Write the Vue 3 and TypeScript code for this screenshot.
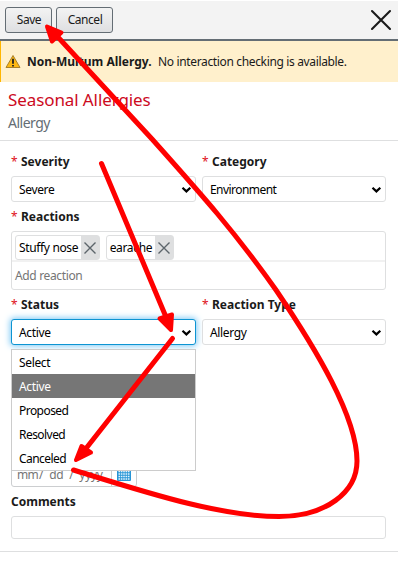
<script setup lang="ts">
import { ref } from 'vue'

const severity = ref('Severe')
const category = ref('Environment')
const status = ref('Active')
const reactionType = ref('Allergy')
const reactions = ref<string[]>(['Stuffy nose', 'earache'])
const statusOptions: string[] = ['Select', 'Active', 'Proposed', 'Resolved', 'Canceled']

function removeReaction(index: number) {
  reactions.value.splice(index, 1)
}
</script>

<template>
  <div class="panel">
    <header class="toolbar">
      <button class="btn save">Save</button>
      <button class="btn cancel">Cancel</button>
      <svg class="close" width="22" height="22" viewBox="0 0 22 22"><path d="M2 2 20 20M20 2 2 20" /></svg>
    </header>

    <div class="alert">
      <svg class="warn" width="18" height="16" viewBox="0 0 18 16">
        <path d="M8 1.5 1 13.5H15Z" fill="#fdb813" stroke="#a9802a" stroke-width="1" stroke-linejoin="round" />
        <path d="M8 4.8V9.8M8 11V12.6" stroke="#222" stroke-width="1.8" />
      </svg>
      <strong>Non-Multum Allergy.</strong>
      <span>No interaction checking is available.</span>
    </div>

    <div class="heading">
      <h1>Seasonal Allergies</h1>
      <p>Allergy</p>
    </div>

    <main class="form">
      <div class="row">
        <div class="field">
          <label><i>*</i><b>Severity</b></label>
          <div class="select"><span>{{ severity }}</span><svg width="11" height="8" viewBox="0 0 11 8"><path d="M1.5 1.7 5.4 5.4 9.3 1.7" /></svg></div>
        </div>
        <div class="field">
          <label><i>*</i><b>Category</b></label>
          <div class="select"><span class="tight">{{ category }}</span><svg width="11" height="8" viewBox="0 0 11 8"><path d="M1.5 1.7 5.4 5.4 9.3 1.7" /></svg></div>
        </div>
      </div>

      <label><i>*</i><b>Reactions</b></label>
      <div class="reactions">
        <div class="chips">
          <span v-for="(name, i) in reactions" :key="name" class="chip">
            <span class="chip-name">{{ name }}</span>
            <span class="chip-x" @click="removeReaction(i)"><svg width="14" height="14" viewBox="0 0 14 14"><path d="M1.5 1.5 12.5 12.5M12.5 1.5 1.5 12.5" /></svg></span>
          </span>
        </div>
        <div class="add">Add reaction</div>
      </div>

      <div class="row">
        <div class="field status">
          <label><i>*</i><b>Status</b></label>
          <div class="select focus"><span>{{ status }}</span><svg width="11" height="8" viewBox="0 0 11 8"><path d="M1.5 1.7 5.4 5.4 9.3 1.7" /></svg></div>
          <ul class="menu">
            <li v-for="o in statusOptions" :key="o" :class="{ on: o === status, tight: o.length > 6 }" @click="status = o">{{ o }}</li>
          </ul>
        </div>
        <div class="field">
          <label><i>*</i><b>Reaction Type</b></label>
          <div class="select"><span>{{ reactionType }}</span><svg width="11" height="8" viewBox="0 0 11 8"><path d="M1.5 1.7 5.4 5.4 9.3 1.7" /></svg></div>
        </div>
      </div>

      <div class="date">
        <span class="mask"><span class="mm">mm</span><span>/</span><span class="dd">dd</span><span>/</span><span class="yy">yyyy</span></span>
        <span class="cal">
          <svg width="14" height="13" viewBox="0 0 14 13">
            <rect width="14" height="13" rx="1" fill="#2795d6" />
            <path d="M1.500 3.500H12.500M1.500 6H12.500M1.500 8.500H12.500M1.500 11H12.500" stroke="#e4f3fc" stroke-width="1.6" stroke-dasharray="1.6 .75" />
          </svg>
        </span>
      </div>

      <label class="plain"><b>Comments</b></label>
      <div class="comments"></div>
    </main>

    <svg class="arrows" width="404" height="562" viewBox="0 0 404 562">
      <path class="line" d="M101.500 163.500 166 317" />
      <path class="head" d="M171 330 159.500 318.500 172 314.500Z" />
      <path class="line" d="M172.500 338.500 84 451" />
      <path class="head" d="M76 460 81.500 446 91 452.500Z" />
      <path class="line" d="M73.500 470C145 492 219 516.500 279 516.500C326 516.500 357 492 357 461C357 417 316 349 276 290C235 232 202 195 152 139L56 35" />
      <path class="head" d="M47 26.500 61.500 32.500 52 41.500Z" />
    </svg>
  </div>
</template>

<style>
body {
  background: #fff;
}
</style>

<style scoped>
* {
  box-sizing: border-box;
}
.panel {
  position: relative;
  width: 404px;
  height: 562px;
  padding: 1px 6px 0 0;
  overflow: hidden;
  font: 12px/16px 'Noto Sans', 'Open Sans', sans-serif;
  letter-spacing: -0.35px;
  color: #1a1a1a;
}
.toolbar {
  display: flex;
  gap: 4px;
  height: 40px;
  padding: 6px 6px 0 5px;
  background: #f3f3f3;
  border-bottom: 2px solid #646d74;
}
.btn {
  height: 26px;
  padding: 0 0 0 1px;
  font: inherit;
  letter-spacing: -0.45px;
  color: #1a1a1a;
  background: linear-gradient(#f3f3f3, #dedfe1);
  border: 1px solid #646d74;
  border-radius: 3px;
}
.save {
  width: 47px;
}
.cancel {
  width: 57px;
}
.close {
  margin: 2px 0 0 auto;
  fill: none;
  stroke: #1a1a1a;
  stroke-width: 2.1;
  stroke-linecap: round;
}
.alert {
  display: flex;
  align-items: center;
  height: 41px;
  padding-left: 4px;
  background: #fff0cc;
  border-left: 1px solid #ffb600;
}
.alert strong {
  width: 131px;
  margin-left: 4px;
  letter-spacing: 0;
  white-space: nowrap;
}
.alert span {
  white-space: nowrap;
}
.heading {
  height: 59px;
  padding: 6px 0 0 8px;
  border-bottom: 1px solid #dedfe0;
}
h1 {
  margin: 0;
  font-size: 17px;
  font-weight: 400;
  line-height: 24px;
  letter-spacing: -0.1px;
  color: #cc0a1e;
}
p {
  margin: 1px 0 0;
  font-size: 14px;
  line-height: 20px;
  letter-spacing: -0.5px;
  color: #646d74;
}
.form {
  height: 411px;
  padding: 10px 12px 0 11px;
  border-bottom: 1px solid #dedfe0;
}
.row {
  display: grid;
  grid-template-columns: 185px 184px;
  gap: 6px;
}
.field {
  position: relative;
}
label {
  display: flex;
  align-items: center;
  height: 20px;
  padding-top: 2px;
  margin-bottom: 5px;
  letter-spacing: 0;
}
label i {
  width: 10px;
  font-style: normal;
  color: #e01020;
}
.select {
  display: flex;
  align-items: center;
  justify-content: space-between;
  height: 26px;
  padding: 1px 3px 0 7px;
  color: #000;
  background: #fff;
  border: 1px solid #dedfe0;
  border-radius: 3px;
}
.select svg {
  fill: none;
  stroke: #000;
  stroke-width: 2.2;
}
.tight {
  letter-spacing: -0.55px;
}
.row + label {
  margin-top: 4px;
}
.focus {
  border-color: #0d94d2;
  box-shadow: 0 0 6px 1px #7cc8f5;
}
.menu {
  position: absolute;
  z-index: 2;
  top: 55px;
  left: 0;
  width: 185px;
  height: 122px;
  margin: 0;
  padding: 0;
  list-style: none;
  color: #000;
  background: #fff;
  border: 1px solid #ccc;
}
.menu li {
  height: 24px;
  padding-left: 7px;
  line-height: 25px;
}
.menu .on {
  color: #fff;
  background: #767676;
}
.reactions {
  height: 59px;
  margin-bottom: 4px;
  border: 1px solid #dedfe0;
  border-radius: 3px;
}
.chips {
  display: flex;
  gap: 6px;
  height: 30px;
  padding: 3px 0 0 3px;
  border-bottom: 2px solid #f1f1f1;
}
.chip {
  display: flex;
  height: 25px;
  background: #fff;
  border: 1px solid #dedfe0;
  border-radius: 3px;
}
.chip-name {
  padding: 0 2.5px 0 3px;
  line-height: 24px;
  color: #000;
}
.chip-x {
  display: flex;
  align-items: center;
  justify-content: center;
  width: 18px;
  background: #dedfe0;
}
.chip-x svg {
  fill: none;
  stroke: #5c656b;
  stroke-width: 1.4;
}
.add {
  padding-left: 3px;
  line-height: 28px;
  color: #757575;
}
.date {
  display: flex;
  width: 126px;
  height: 26px;
  margin-top: 116px;
  margin-bottom: 4px;
  color: #757575;
  border: 1px solid #ccced0;
  border-radius: 3px;
}
.mask {
  display: flex;
  width: 100px;
  padding-left: 5px;
  line-height: 25px;
  border-right: 1px solid #ccced0;
}
.mask .mm {
  letter-spacing: -0.7px;
  margin-right: 1px;
}
.mask .dd {
  margin: 0 6px;
}
.mask .yy {
  margin-left: 6px;
}
.cal {
  display: flex;
  align-items: center;
  padding-left: 5px;
}
.comments {
  height: 23px;
  border: 1px solid #dedfe0;
  border-radius: 3px;
}
.arrows {
  position: absolute;
  z-index: 3;
  top: 0;
  left: 0;
  pointer-events: none;
}
.line {
  fill: none;
  stroke: #f00;
  stroke-width: 5;
  stroke-linecap: round;
}
.head {
  fill: #f00;
  stroke: #f00;
  stroke-width: 4;
  stroke-linejoin: round;
}
</style>
